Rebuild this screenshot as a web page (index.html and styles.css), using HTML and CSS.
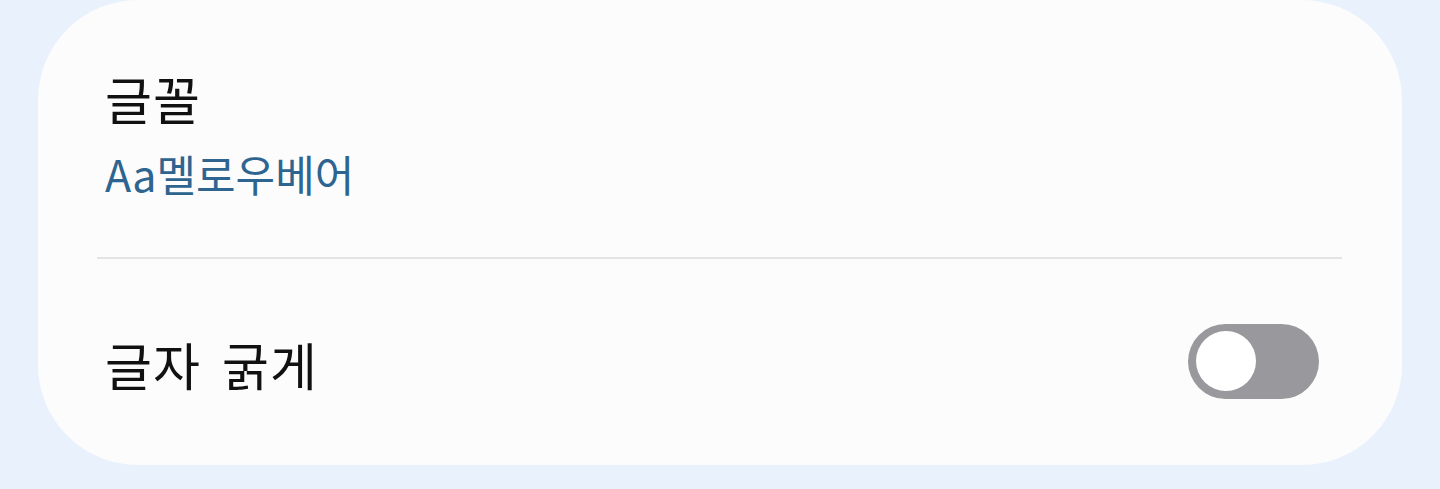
FILE: index.html
```html
<!DOCTYPE html>
<html lang="ko">
<head>
<meta charset="utf-8">
<title>글꼴 설정</title>
<link rel="stylesheet" href="styles.css">
</head>
<body>
  <section class="card">
    <div class="row row-font">
      <div class="label">글꼴</div>
      <div class="value">Aa멜로우베어</div>
    </div>
    <hr class="divider">
    <div class="row row-bold">
      <div class="label">글자 굵게</div>
      <div class="switch" role="switch" aria-checked="false">
        <span class="knob"></span>
      </div>
    </div>
  </section>
</body>
</html>
```

FILE: styles.css
```css
html, body {
  margin: 0;
  padding: 0;
}

body {
  background: #e9f1fd;
  width: 1440px;
  height: 489px;
  font-family: "Noto Sans CJK KR", "Noto Sans", sans-serif;
}

.card {
  margin: 0 38px;
  height: 465px;
  box-sizing: border-box;
  background: #fcfcfd;
  border-radius: 100px;
  display: flex;
  flex-direction: column;
}

.row {
  padding: 0 83px 0 67px;
}

.row-font {
  padding-top: 66px;
  padding-bottom: 57px;
}

.label {
  font-size: 51px;
  line-height: 64px;
  font-weight: 400;
  letter-spacing: 1px;
  word-spacing: 6px;
  color: #111111;
}

.value {
  margin-top: 16px;
  font-size: 43px;
  line-height: 54px;
  color: #2e6590;
}

.divider {
  margin: 0 60px 0 59px;
  border: 0;
  height: 2px;
  background: #e4e4e6;
}

.row-bold {
  flex: 1;
  display: flex;
  align-items: center;
  justify-content: space-between;
}

.row-bold .label {
  margin-top: 4px;
}

.switch {
  position: relative;
  width: 131px;
  height: 75px;
  border-radius: 38px;
  background: #99999d;
  margin-top: -2px;
}

.knob {
  position: absolute;
  left: 8px;
  top: 7px;
  width: 60px;
  height: 60px;
  border-radius: 50%;
  background: #ffffff;
}
```
